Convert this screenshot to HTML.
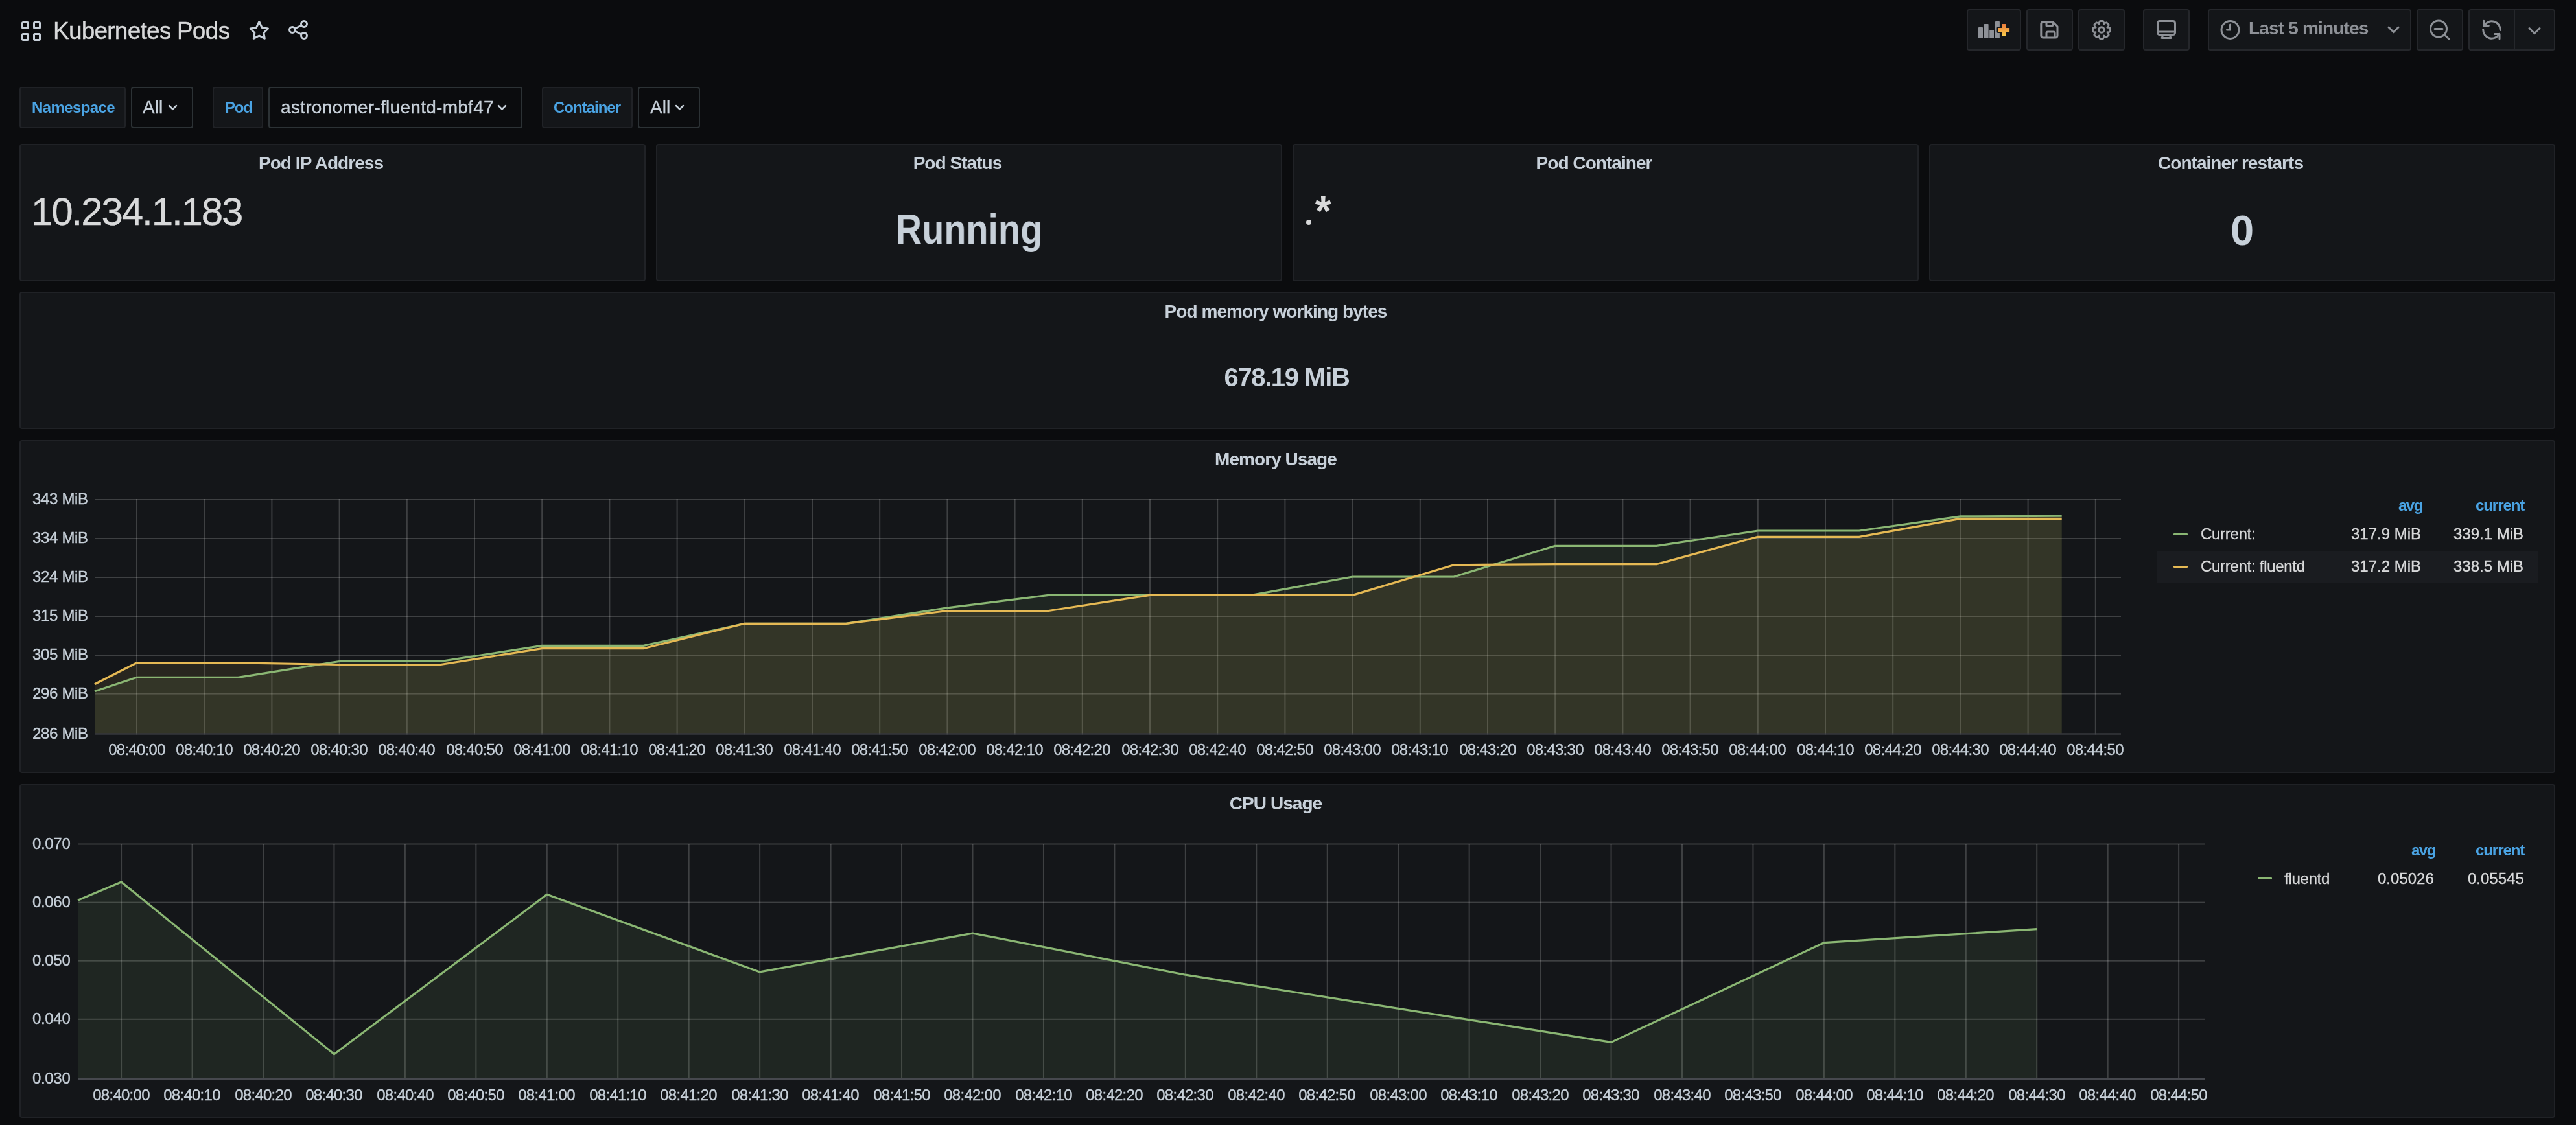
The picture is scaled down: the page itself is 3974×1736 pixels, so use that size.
<!DOCTYPE html><html><head><meta charset="utf-8"><style>
html,body{margin:0;padding:0;width:3974px;height:1736px;overflow:hidden;background:#0b0c0e;font-family:"Liberation Sans", sans-serif;}
.t{position:absolute;white-space:nowrap;line-height:1;will-change:transform;}.r{-webkit-text-stroke:0.35px currentColor;}
.b{position:absolute;box-sizing:border-box;}
svg{position:absolute;left:0;top:0;}
</style></head><body>
<svg width="3974" height="100" style="left:0;top:0">
<rect x="34.5" y="34.5" width="9" height="9" rx="1.2" fill="none" stroke="#c7d0d9" stroke-width="3"/>
<rect x="52.5" y="34.5" width="9" height="9" rx="1.2" fill="none" stroke="#c7d0d9" stroke-width="3"/>
<rect x="34.5" y="52.5" width="9" height="9" rx="1.2" fill="none" stroke="#c7d0d9" stroke-width="3"/>
<rect x="52.5" y="52.5" width="9" height="9" rx="1.2" fill="none" stroke="#c7d0d9" stroke-width="3"/>
<path d="M399.8 33.5 L404.2 42.6 L413.5 44 L406.8 50.8 L408.3 59.3 L399.8 55 L391.3 59.3 L392.8 50.8 L386.2 44 L395.4 42.6 Z" fill="none" stroke="#c7d0d9" stroke-width="3" stroke-linejoin="round"/>
<g fill="none" stroke="#c7d0d9" stroke-width="3"><circle cx="469" cy="37" r="4.5"/><circle cx="451" cy="46" r="4.5"/><circle cx="469" cy="55" r="4.5"/><line x1="455" y1="44" x2="465" y2="39"/><line x1="455" y1="48" x2="465" y2="53"/></g>
</svg>
<div class="t r" style="top:28.68px;font-size:37px;color:#d8d9da;font-weight:400;letter-spacing:-0.78px;left:82.00px;">Kubernetes Pods</div>
<div class="b" style="left:3034px;top:14px;width:84px;height:64px;background:#141619;border:2px solid #25272b;border-radius:4px;"></div>
<div class="b" style="left:3126px;top:14px;width:72px;height:64px;background:#141619;border:2px solid #25272b;border-radius:4px;"></div>
<div class="b" style="left:3206px;top:14px;width:72px;height:64px;background:#141619;border:2px solid #25272b;border-radius:4px;"></div>
<div class="b" style="left:3306px;top:14px;width:72px;height:64px;background:#141619;border:2px solid #25272b;border-radius:4px;"></div>
<div class="b" style="left:3406px;top:14px;width:314px;height:64px;background:#141619;border:2px solid #25272b;border-radius:4px;"></div>
<div class="b" style="left:3728px;top:14px;width:72px;height:64px;background:#141619;border:2px solid #25272b;border-radius:4px;"></div>
<div class="b" style="left:3808px;top:14px;width:134px;height:64px;background:#141619;border:2px solid #25272b;border-radius:4px;"></div>
<div class="b" style="left:3878px;top:14px;width:2px;height:64px;background:#25272b"></div>
<svg width="3974" height="100" style="left:0;top:0">
<defs><linearGradient id="og" x1="0" y1="0" x2="0" y2="1"><stop offset="0" stop-color="#eb7b3c"/><stop offset="1" stop-color="#f7c94a"/></linearGradient></defs>
<g fill="#8e9197"><rect x="3052" y="42" width="7" height="17" rx="0.8"/><rect x="3060.8" y="37" width="6.8" height="22" rx="0.8"/><rect x="3069.2" y="46" width="6.8" height="13" rx="0.8"/><rect x="3078" y="33" width="6.9" height="26" rx="0.8"/></g>
<path d="M3082.3 43 h6 v-5.9 h5.9 v5.9 h5.9 v6.2 h-5.9 v5.7 h-5.9 v-5.7 h-6 z" fill="#141619" stroke="#141619" stroke-width="3.5" stroke-linejoin="round"/>
<path d="M3082.3 43 h6 v-5.9 h5.9 v5.9 h5.9 v6.2 h-5.9 v5.7 h-5.9 v-5.7 h-6 z" fill="url(#og)"/>
<g fill="none" stroke="#8e9197" stroke-width="3" stroke-linejoin="round"><path d="M3152.8 33.8 h14.2 l7 7 v14.3 a3 3 0 0 1 -3 3 h-19.2 a3 3 0 0 1 -3 -3 v-18.3 a3 3 0 0 1 3 -3 z"/><path d="M3157 34 v5.5 h9.5 v-5.5"/><path d="M3157 58 v-7 a2 2 0 0 1 2 -2 h9 a2 2 0 0 1 2 2 v7"/></g>
<polygon points="3238.10,35.40 3239.60,32.50 3244.40,32.50 3245.90,35.40 3245.67,37.13 3246.74,35.75 3249.85,34.76 3253.24,38.15 3252.25,41.26 3250.87,42.33 3252.60,42.10 3255.50,43.60 3255.50,48.40 3252.60,49.90 3250.87,49.67 3252.25,50.74 3253.24,53.85 3249.85,57.24 3246.74,56.25 3245.67,54.87 3245.90,56.60 3244.40,59.50 3239.60,59.50 3238.10,56.60 3238.33,54.87 3237.26,56.25 3234.15,57.24 3230.76,53.85 3231.75,50.74 3233.13,49.67 3231.40,49.90 3228.50,48.40 3228.50,43.60 3231.40,42.10 3233.13,42.33 3231.75,41.26 3230.76,38.15 3234.15,34.76 3237.26,35.75 3238.33,37.13" fill="none" stroke="#8e9197" stroke-width="2.8" stroke-linejoin="round"/>
<circle cx="3242" cy="46" r="4.3" fill="none" stroke="#8e9197" stroke-width="3"/>
<g fill="none" stroke="#8e9197" stroke-width="3" stroke-linejoin="round"><rect x="3328.5" y="32.5" width="27" height="21" rx="3"/><line x1="3329" y1="49" x2="3355" y2="49"/><path d="M3337 54 l-2 4.5 h14 l-2 -4.5"/></g>
<g fill="none" stroke="#8e9197" stroke-width="3" stroke-linecap="round"><circle cx="3440.5" cy="46" r="13.5"/><path d="M3440.5 38 v8 h-5"/></g>
<path d="M3685 42 l7.5 7.5 l7.5 -7.5" fill="none" stroke="#8e9197" stroke-width="3" stroke-linecap="round"/>
<path d="M3902 43.5 l8 8 l8 -8" fill="none" stroke="#8e9197" stroke-width="3" stroke-linecap="round"/>
<g fill="none" stroke="#8e9197" stroke-width="3" stroke-linecap="round"><circle cx="3762" cy="44.5" r="12.5"/><line x1="3756" y1="44.5" x2="3768" y2="44.5"/><line x1="3771" y1="53.5" x2="3778" y2="60"/></g>
<g fill="none" stroke="#8e9197" stroke-width="3" stroke-linecap="round" stroke-linejoin="round"><path d="M3832.4 39.6 A13.3 13.3 0 0 1 3857.3 46.5"/><path d="M3831.8 32.3 V39.6 H3839.3"/><path d="M3855.6 52.4 A13.3 13.3 0 0 1 3830.7 45.5"/><path d="M3856 59.7 V52.4 H3848.5"/></g>
</svg>
<div class="t" style="top:30.30px;font-size:28px;color:#8e9197;font-weight:700;letter-spacing:-0.83px;left:3469.00px;">Last 5 minutes</div>
<div class="b" style="left:30px;top:134px;width:164px;height:64px;background:#141619;border:2px solid #202226;border-radius:4px;"></div>
<div class="t" style="top:153.68px;font-size:24px;color:#4aa3e3;font-weight:700;letter-spacing:-0.6px;left:49.00px;">Namespace</div>
<div class="b" style="left:202px;top:134px;width:96px;height:64px;background:#0b0c0e;border:2px solid #2c3235;border-radius:4px;"></div>
<div class="t r" style="top:152.30px;font-size:28px;color:#c7d0d9;font-weight:400;letter-spacing:0px;left:220.00px;">All</div>
<svg width="20" height="20" style="left:258px;top:158px"><path d="M3 5 l5.5 5.5 l5.5 -5.5" fill="none" stroke="#c7d0d9" stroke-width="2.5" stroke-linecap="round"/></svg>
<div class="b" style="left:328px;top:134px;width:78px;height:64px;background:#141619;border:2px solid #202226;border-radius:4px;"></div>
<div class="t" style="top:153.68px;font-size:24px;color:#4aa3e3;font-weight:700;letter-spacing:-1.2px;left:346.50px;">Pod</div>
<div class="b" style="left:414px;top:134px;width:392px;height:64px;background:#0b0c0e;border:2px solid #2c3235;border-radius:4px;"></div>
<div class="t r" style="top:152.30px;font-size:28px;color:#c7d0d9;font-weight:400;letter-spacing:0.28px;left:433.00px;">astronomer-fluentd-mbf47</div>
<svg width="20" height="20" style="left:766px;top:158px"><path d="M3 5 l5.5 5.5 l5.5 -5.5" fill="none" stroke="#c7d0d9" stroke-width="2.5" stroke-linecap="round"/></svg>
<div class="b" style="left:836px;top:134px;width:140px;height:64px;background:#141619;border:2px solid #202226;border-radius:4px;"></div>
<div class="t" style="top:153.68px;font-size:24px;color:#4aa3e3;font-weight:700;letter-spacing:-1.0px;left:854.00px;">Container</div>
<div class="b" style="left:984px;top:134px;width:96px;height:64px;background:#0b0c0e;border:2px solid #2c3235;border-radius:4px;"></div>
<div class="t r" style="top:152.30px;font-size:28px;color:#c7d0d9;font-weight:400;letter-spacing:0px;left:1003.00px;">All</div>
<svg width="20" height="20" style="left:1040px;top:158px"><path d="M3 5 l5.5 5.5 l5.5 -5.5" fill="none" stroke="#c7d0d9" stroke-width="2.5" stroke-linecap="round"/></svg>
<div class="b" style="left:30px;top:222px;width:966px;height:212px;background:#141619;border:2px solid #202226;border-radius:4px;"></div>
<div class="t" style="top:238.30px;font-size:28px;color:#c7d0d9;font-weight:700;letter-spacing:-0.95px;left:-5.47px;width:1000px;text-align:center;">Pod IP Address</div>
<div class="b" style="left:1012px;top:222px;width:966px;height:212px;background:#141619;border:2px solid #202226;border-radius:4px;"></div>
<div class="t" style="top:238.30px;font-size:28px;color:#c7d0d9;font-weight:700;letter-spacing:-0.95px;left:976.52px;width:1000px;text-align:center;">Pod Status</div>
<div class="b" style="left:1994px;top:222px;width:966px;height:212px;background:#141619;border:2px solid #202226;border-radius:4px;"></div>
<div class="t" style="top:238.30px;font-size:28px;color:#c7d0d9;font-weight:700;letter-spacing:-0.95px;left:1958.53px;width:1000px;text-align:center;">Pod Container</div>
<div class="b" style="left:2976px;top:222px;width:966px;height:212px;background:#141619;border:2px solid #202226;border-radius:4px;"></div>
<div class="t" style="top:238.30px;font-size:28px;color:#c7d0d9;font-weight:700;letter-spacing:-0.95px;left:2940.53px;width:1000px;text-align:center;">Container restarts</div>
<div class="t r" style="top:296.51px;font-size:60px;color:#d8d9da;font-weight:400;letter-spacing:-2.08px;left:48.30px;">10.234.1.183</div>
<div class="t" style="top:321.48px;font-size:65px;color:#c7d0d9;font-weight:700;letter-spacing:0px;transform:scaleX(0.86);left:995.00px;width:1000px;text-align:center;">Running</div>
<div class="t" style="top:322.98px;font-size:65px;color:#c7d0d9;font-weight:700;letter-spacing:0px;left:2959.00px;width:1000px;text-align:center;">0</div>
<svg width="20" height="20" style="left:2009px;top:333px"><circle cx="10" cy="10" r="4" fill="#d8d9da"/></svg>
<div class="t" style="top:294.32px;font-size:64px;color:#d8d9da;font-weight:700;letter-spacing:0px;left:2010.50px;"><span style="visibility:hidden">.</span>*</div>
<div class="b" style="left:30px;top:450px;width:3912px;height:212px;background:#141619;border:2px solid #202226;border-radius:4px;"></div>
<div class="t" style="top:467.30px;font-size:28px;color:#c7d0d9;font-weight:700;letter-spacing:-0.95px;left:1467.53px;width:1000px;text-align:center;">Pod memory working bytes</div>
<div class="t" style="top:562.14px;font-size:40px;color:#c7d0d9;font-weight:700;letter-spacing:-1.4px;left:1485.30px;width:1000px;text-align:center;">678.19 MiB</div>
<div class="b" style="left:30px;top:679px;width:3912px;height:514px;background:#141619;border:2px solid #202226;border-radius:4px;"></div>
<div class="t" style="top:695.30px;font-size:28px;color:#c7d0d9;font-weight:700;letter-spacing:-0.95px;left:1467.53px;width:1000px;text-align:center;">Memory Usage</div>
<svg width="3974" height="1736" style="left:0;top:0">
<rect x="146" y="770.00" width="3126" height="2" fill="#fff" fill-opacity="0.18"/><rect x="146" y="830.00" width="3126" height="2" fill="#fff" fill-opacity="0.18"/><rect x="146" y="890.00" width="3126" height="2" fill="#fff" fill-opacity="0.18"/><rect x="146" y="950.00" width="3126" height="2" fill="#fff" fill-opacity="0.18"/><rect x="146" y="1010.00" width="3126" height="2" fill="#fff" fill-opacity="0.18"/><rect x="146" y="1069.60" width="3126" height="2" fill="#fff" fill-opacity="0.18"/><rect x="210.00" y="770" width="2" height="363.5" fill="#fff" fill-opacity="0.18"/><rect x="314.20" y="770" width="2" height="363.5" fill="#fff" fill-opacity="0.18"/><rect x="418.40" y="770" width="2" height="363.5" fill="#fff" fill-opacity="0.18"/><rect x="522.60" y="770" width="2" height="363.5" fill="#fff" fill-opacity="0.18"/><rect x="626.80" y="770" width="2" height="363.5" fill="#fff" fill-opacity="0.18"/><rect x="731.00" y="770" width="2" height="363.5" fill="#fff" fill-opacity="0.18"/><rect x="835.20" y="770" width="2" height="363.5" fill="#fff" fill-opacity="0.18"/><rect x="939.40" y="770" width="2" height="363.5" fill="#fff" fill-opacity="0.18"/><rect x="1043.60" y="770" width="2" height="363.5" fill="#fff" fill-opacity="0.18"/><rect x="1147.80" y="770" width="2" height="363.5" fill="#fff" fill-opacity="0.18"/><rect x="1252.00" y="770" width="2" height="363.5" fill="#fff" fill-opacity="0.18"/><rect x="1356.20" y="770" width="2" height="363.5" fill="#fff" fill-opacity="0.18"/><rect x="1460.40" y="770" width="2" height="363.5" fill="#fff" fill-opacity="0.18"/><rect x="1564.60" y="770" width="2" height="363.5" fill="#fff" fill-opacity="0.18"/><rect x="1668.80" y="770" width="2" height="363.5" fill="#fff" fill-opacity="0.18"/><rect x="1773.00" y="770" width="2" height="363.5" fill="#fff" fill-opacity="0.18"/><rect x="1877.20" y="770" width="2" height="363.5" fill="#fff" fill-opacity="0.18"/><rect x="1981.40" y="770" width="2" height="363.5" fill="#fff" fill-opacity="0.18"/><rect x="2085.60" y="770" width="2" height="363.5" fill="#fff" fill-opacity="0.18"/><rect x="2189.80" y="770" width="2" height="363.5" fill="#fff" fill-opacity="0.18"/><rect x="2294.00" y="770" width="2" height="363.5" fill="#fff" fill-opacity="0.18"/><rect x="2398.20" y="770" width="2" height="363.5" fill="#fff" fill-opacity="0.18"/><rect x="2502.40" y="770" width="2" height="363.5" fill="#fff" fill-opacity="0.18"/><rect x="2606.60" y="770" width="2" height="363.5" fill="#fff" fill-opacity="0.18"/><rect x="2710.80" y="770" width="2" height="363.5" fill="#fff" fill-opacity="0.18"/><rect x="2815.00" y="770" width="2" height="363.5" fill="#fff" fill-opacity="0.18"/><rect x="2919.20" y="770" width="2" height="363.5" fill="#fff" fill-opacity="0.18"/><rect x="3023.40" y="770" width="2" height="363.5" fill="#fff" fill-opacity="0.18"/><rect x="3127.60" y="770" width="2" height="363.5" fill="#fff" fill-opacity="0.18"/><rect x="3231.80" y="770" width="2" height="363.5" fill="#fff" fill-opacity="0.18"/>
<polygon points="146.0,1066.7 211.0,1045.3 367.3,1045.3 523.6,1020.5 679.9,1020.5 836.2,996.4 992.5,996.4 1148.8,962.3 1305.1,962.3 1461.4,937.8 1617.7,918.4 1774.0,918.4 1930.3,918.4 2086.6,890.0 2242.9,890.0 2399.2,842.3 2555.5,842.3 2711.8,819.0 2868.1,819.0 3024.4,796.9 3180.7,796.2 3180.7,1131.5 146.0,1131.5" fill="#8ab673" fill-opacity="0.1"/>
<polygon points="146.0,1055.8 211.0,1022.8 367.3,1022.8 523.6,1025.5 679.9,1025.5 836.2,1000.7 992.5,1000.7 1148.8,962.3 1305.1,962.3 1461.4,942.5 1617.7,942.5 1774.0,918.4 1930.3,918.4 2086.6,918.4 2242.9,871.8 2399.2,870.6 2555.5,870.6 2711.8,828.3 2868.1,828.3 3024.4,800.4 3180.7,800.3 3180.7,1131.5 146.0,1131.5" fill="#e5b954" fill-opacity="0.1"/>
<polyline points="146.0,1066.7 211.0,1045.3 367.3,1045.3 523.6,1020.5 679.9,1020.5 836.2,996.4 992.5,996.4 1148.8,962.3 1305.1,962.3 1461.4,937.8 1617.7,918.4 1774.0,918.4 1930.3,918.4 2086.6,890.0 2242.9,890.0 2399.2,842.3 2555.5,842.3 2711.8,819.0 2868.1,819.0 3024.4,796.9 3180.7,796.2" fill="none" stroke="#8ab673" stroke-width="3.2" stroke-linejoin="round"/>
<polyline points="146.0,1055.8 211.0,1022.8 367.3,1022.8 523.6,1025.5 679.9,1025.5 836.2,1000.7 992.5,1000.7 1148.8,962.3 1305.1,962.3 1461.4,942.5 1617.7,942.5 1774.0,918.4 1930.3,918.4 2086.6,918.4 2242.9,871.8 2399.2,870.6 2555.5,870.6 2711.8,828.3 2868.1,828.3 3024.4,800.4 3180.7,800.3" fill="none" stroke="#e5b954" stroke-width="3.2" stroke-linejoin="round"/>
<rect x="146" y="1131.50" width="3126" height="2" fill="#46484e"/>
</svg>
<div class="t r" style="top:758.18px;font-size:24px;color:#c7d0d9;font-weight:400;letter-spacing:-0.33px;right:3838.17px;text-align:right;">343 MiB</div>
<div class="t r" style="top:818.18px;font-size:24px;color:#c7d0d9;font-weight:400;letter-spacing:-0.33px;right:3838.17px;text-align:right;">334 MiB</div>
<div class="t r" style="top:878.18px;font-size:24px;color:#c7d0d9;font-weight:400;letter-spacing:-0.33px;right:3838.17px;text-align:right;">324 MiB</div>
<div class="t r" style="top:938.18px;font-size:24px;color:#c7d0d9;font-weight:400;letter-spacing:-0.33px;right:3838.17px;text-align:right;">315 MiB</div>
<div class="t r" style="top:998.18px;font-size:24px;color:#c7d0d9;font-weight:400;letter-spacing:-0.33px;right:3838.17px;text-align:right;">305 MiB</div>
<div class="t r" style="top:1057.78px;font-size:24px;color:#c7d0d9;font-weight:400;letter-spacing:-0.33px;right:3838.17px;text-align:right;">296 MiB</div>
<div class="t r" style="top:1119.68px;font-size:24px;color:#c7d0d9;font-weight:400;letter-spacing:-0.33px;right:3838.17px;text-align:right;">286 MiB</div>
<div class="t r" style="top:1145.18px;font-size:24px;color:#c7d0d9;font-weight:400;letter-spacing:-0.73px;left:-289.37px;width:1000px;text-align:center;">08:40:00</div>
<div class="t r" style="top:1145.18px;font-size:24px;color:#c7d0d9;font-weight:400;letter-spacing:-0.73px;left:-185.17px;width:1000px;text-align:center;">08:40:10</div>
<div class="t r" style="top:1145.18px;font-size:24px;color:#c7d0d9;font-weight:400;letter-spacing:-0.73px;left:-80.97px;width:1000px;text-align:center;">08:40:20</div>
<div class="t r" style="top:1145.18px;font-size:24px;color:#c7d0d9;font-weight:400;letter-spacing:-0.73px;left:23.24px;width:1000px;text-align:center;">08:40:30</div>
<div class="t r" style="top:1145.18px;font-size:24px;color:#c7d0d9;font-weight:400;letter-spacing:-0.73px;left:127.43px;width:1000px;text-align:center;">08:40:40</div>
<div class="t r" style="top:1145.18px;font-size:24px;color:#c7d0d9;font-weight:400;letter-spacing:-0.73px;left:231.63px;width:1000px;text-align:center;">08:40:50</div>
<div class="t r" style="top:1145.18px;font-size:24px;color:#c7d0d9;font-weight:400;letter-spacing:-0.73px;left:335.84px;width:1000px;text-align:center;">08:41:00</div>
<div class="t r" style="top:1145.18px;font-size:24px;color:#c7d0d9;font-weight:400;letter-spacing:-0.73px;left:440.03px;width:1000px;text-align:center;">08:41:10</div>
<div class="t r" style="top:1145.18px;font-size:24px;color:#c7d0d9;font-weight:400;letter-spacing:-0.73px;left:544.23px;width:1000px;text-align:center;">08:41:20</div>
<div class="t r" style="top:1145.18px;font-size:24px;color:#c7d0d9;font-weight:400;letter-spacing:-0.73px;left:648.44px;width:1000px;text-align:center;">08:41:30</div>
<div class="t r" style="top:1145.18px;font-size:24px;color:#c7d0d9;font-weight:400;letter-spacing:-0.73px;left:752.63px;width:1000px;text-align:center;">08:41:40</div>
<div class="t r" style="top:1145.18px;font-size:24px;color:#c7d0d9;font-weight:400;letter-spacing:-0.73px;left:856.84px;width:1000px;text-align:center;">08:41:50</div>
<div class="t r" style="top:1145.18px;font-size:24px;color:#c7d0d9;font-weight:400;letter-spacing:-0.73px;left:961.04px;width:1000px;text-align:center;">08:42:00</div>
<div class="t r" style="top:1145.18px;font-size:24px;color:#c7d0d9;font-weight:400;letter-spacing:-0.73px;left:1065.24px;width:1000px;text-align:center;">08:42:10</div>
<div class="t r" style="top:1145.18px;font-size:24px;color:#c7d0d9;font-weight:400;letter-spacing:-0.73px;left:1169.43px;width:1000px;text-align:center;">08:42:20</div>
<div class="t r" style="top:1145.18px;font-size:24px;color:#c7d0d9;font-weight:400;letter-spacing:-0.73px;left:1273.63px;width:1000px;text-align:center;">08:42:30</div>
<div class="t r" style="top:1145.18px;font-size:24px;color:#c7d0d9;font-weight:400;letter-spacing:-0.73px;left:1377.84px;width:1000px;text-align:center;">08:42:40</div>
<div class="t r" style="top:1145.18px;font-size:24px;color:#c7d0d9;font-weight:400;letter-spacing:-0.73px;left:1482.04px;width:1000px;text-align:center;">08:42:50</div>
<div class="t r" style="top:1145.18px;font-size:24px;color:#c7d0d9;font-weight:400;letter-spacing:-0.73px;left:1586.24px;width:1000px;text-align:center;">08:43:00</div>
<div class="t r" style="top:1145.18px;font-size:24px;color:#c7d0d9;font-weight:400;letter-spacing:-0.73px;left:1690.44px;width:1000px;text-align:center;">08:43:10</div>
<div class="t r" style="top:1145.18px;font-size:24px;color:#c7d0d9;font-weight:400;letter-spacing:-0.73px;left:1794.63px;width:1000px;text-align:center;">08:43:20</div>
<div class="t r" style="top:1145.18px;font-size:24px;color:#c7d0d9;font-weight:400;letter-spacing:-0.73px;left:1898.84px;width:1000px;text-align:center;">08:43:30</div>
<div class="t r" style="top:1145.18px;font-size:24px;color:#c7d0d9;font-weight:400;letter-spacing:-0.73px;left:2003.04px;width:1000px;text-align:center;">08:43:40</div>
<div class="t r" style="top:1145.18px;font-size:24px;color:#c7d0d9;font-weight:400;letter-spacing:-0.73px;left:2107.24px;width:1000px;text-align:center;">08:43:50</div>
<div class="t r" style="top:1145.18px;font-size:24px;color:#c7d0d9;font-weight:400;letter-spacing:-0.73px;left:2211.44px;width:1000px;text-align:center;">08:44:00</div>
<div class="t r" style="top:1145.18px;font-size:24px;color:#c7d0d9;font-weight:400;letter-spacing:-0.73px;left:2315.64px;width:1000px;text-align:center;">08:44:10</div>
<div class="t r" style="top:1145.18px;font-size:24px;color:#c7d0d9;font-weight:400;letter-spacing:-0.73px;left:2419.84px;width:1000px;text-align:center;">08:44:20</div>
<div class="t r" style="top:1145.18px;font-size:24px;color:#c7d0d9;font-weight:400;letter-spacing:-0.73px;left:2524.04px;width:1000px;text-align:center;">08:44:30</div>
<div class="t r" style="top:1145.18px;font-size:24px;color:#c7d0d9;font-weight:400;letter-spacing:-0.73px;left:2628.24px;width:1000px;text-align:center;">08:44:40</div>
<div class="t r" style="top:1145.18px;font-size:24px;color:#c7d0d9;font-weight:400;letter-spacing:-0.73px;left:2732.44px;width:1000px;text-align:center;">08:44:50</div>
<div class="t" style="top:767.68px;font-size:24px;color:#4aa3e3;font-weight:700;letter-spacing:-1.5px;right:237.00px;text-align:right;">avg</div>
<div class="t" style="top:767.68px;font-size:24px;color:#4aa3e3;font-weight:700;letter-spacing:-1.07px;right:79.43px;text-align:right;">current</div>
<div class="b" style="left:3328px;top:850px;width:587px;height:49px;background:#1a1c20"></div>
<div class="b" style="left:3353px;top:822.5px;width:22px;height:3px;background:#8ab673;border-radius:1px"></div>
<div class="b" style="left:3353px;top:872.5px;width:22px;height:3px;background:#e5b954;border-radius:1px"></div>
<div class="t r" style="top:812.18px;font-size:24px;color:#d8d9da;font-weight:400;letter-spacing:-0.29px;left:3394.50px;">Current:</div>
<div class="t r" style="top:861.68px;font-size:24px;color:#d8d9da;font-weight:400;letter-spacing:-0.29px;left:3394.50px;">Current: fluentd</div>
<div class="t r" style="top:812.18px;font-size:24px;color:#d8d9da;font-weight:400;letter-spacing:0px;right:238.50px;text-align:right;">317.9 MiB</div>
<div class="t r" style="top:812.18px;font-size:24px;color:#d8d9da;font-weight:400;letter-spacing:0px;right:80.50px;text-align:right;">339.1 MiB</div>
<div class="t r" style="top:861.68px;font-size:24px;color:#d8d9da;font-weight:400;letter-spacing:0px;right:238.50px;text-align:right;">317.2 MiB</div>
<div class="t r" style="top:861.68px;font-size:24px;color:#d8d9da;font-weight:400;letter-spacing:0px;right:80.50px;text-align:right;">338.5 MiB</div>
<div class="b" style="left:30px;top:1210px;width:3912px;height:515px;background:#141619;border:2px solid #202226;border-radius:4px;"></div>
<div class="t" style="top:1226.30px;font-size:28px;color:#c7d0d9;font-weight:700;letter-spacing:-0.95px;left:1467.53px;width:1000px;text-align:center;">CPU Usage</div>
<svg width="3974" height="1736" style="left:0;top:0">
<rect x="120" y="1301.50" width="3282" height="2" fill="#fff" fill-opacity="0.18"/><rect x="120" y="1391.60" width="3282" height="2" fill="#fff" fill-opacity="0.18"/><rect x="120" y="1481.70" width="3282" height="2" fill="#fff" fill-opacity="0.18"/><rect x="120" y="1571.80" width="3282" height="2" fill="#fff" fill-opacity="0.18"/><rect x="186.10" y="1302" width="2" height="364" fill="#fff" fill-opacity="0.18"/><rect x="295.55" y="1302" width="2" height="364" fill="#fff" fill-opacity="0.18"/><rect x="405.00" y="1302" width="2" height="364" fill="#fff" fill-opacity="0.18"/><rect x="514.45" y="1302" width="2" height="364" fill="#fff" fill-opacity="0.18"/><rect x="623.90" y="1302" width="2" height="364" fill="#fff" fill-opacity="0.18"/><rect x="733.35" y="1302" width="2" height="364" fill="#fff" fill-opacity="0.18"/><rect x="842.80" y="1302" width="2" height="364" fill="#fff" fill-opacity="0.18"/><rect x="952.25" y="1302" width="2" height="364" fill="#fff" fill-opacity="0.18"/><rect x="1061.70" y="1302" width="2" height="364" fill="#fff" fill-opacity="0.18"/><rect x="1171.15" y="1302" width="2" height="364" fill="#fff" fill-opacity="0.18"/><rect x="1280.60" y="1302" width="2" height="364" fill="#fff" fill-opacity="0.18"/><rect x="1390.05" y="1302" width="2" height="364" fill="#fff" fill-opacity="0.18"/><rect x="1499.50" y="1302" width="2" height="364" fill="#fff" fill-opacity="0.18"/><rect x="1608.95" y="1302" width="2" height="364" fill="#fff" fill-opacity="0.18"/><rect x="1718.40" y="1302" width="2" height="364" fill="#fff" fill-opacity="0.18"/><rect x="1827.85" y="1302" width="2" height="364" fill="#fff" fill-opacity="0.18"/><rect x="1937.30" y="1302" width="2" height="364" fill="#fff" fill-opacity="0.18"/><rect x="2046.75" y="1302" width="2" height="364" fill="#fff" fill-opacity="0.18"/><rect x="2156.20" y="1302" width="2" height="364" fill="#fff" fill-opacity="0.18"/><rect x="2265.65" y="1302" width="2" height="364" fill="#fff" fill-opacity="0.18"/><rect x="2375.10" y="1302" width="2" height="364" fill="#fff" fill-opacity="0.18"/><rect x="2484.55" y="1302" width="2" height="364" fill="#fff" fill-opacity="0.18"/><rect x="2594.00" y="1302" width="2" height="364" fill="#fff" fill-opacity="0.18"/><rect x="2703.45" y="1302" width="2" height="364" fill="#fff" fill-opacity="0.18"/><rect x="2812.90" y="1302" width="2" height="364" fill="#fff" fill-opacity="0.18"/><rect x="2922.35" y="1302" width="2" height="364" fill="#fff" fill-opacity="0.18"/><rect x="3031.80" y="1302" width="2" height="364" fill="#fff" fill-opacity="0.18"/><rect x="3141.25" y="1302" width="2" height="364" fill="#fff" fill-opacity="0.18"/><rect x="3250.70" y="1302" width="2" height="364" fill="#fff" fill-opacity="0.18"/><rect x="3360.15" y="1302" width="2" height="364" fill="#fff" fill-opacity="0.18"/>
<polygon points="120.0,1389.2 187.1,1361.1 515.5,1626.7 843.8,1380.3 1172.2,1499.9 1500.5,1440.1 1828.8,1504.2 2485.6,1608.4 2813.9,1454.7 3142.2,1433.7 3142.2,1664.0 120.0,1664.0" fill="#8ab673" fill-opacity="0.1"/>
<polyline points="120.0,1389.2 187.1,1361.1 515.5,1626.7 843.8,1380.3 1172.2,1499.9 1500.5,1440.1 1828.8,1504.2 2485.6,1608.4 2813.9,1454.7 3142.2,1433.7" fill="none" stroke="#8ab673" stroke-width="3.2" stroke-linejoin="round"/>
<rect x="120" y="1664.00" width="3282" height="2" fill="#46484e"/>
</svg>
<div class="t r" style="top:1289.68px;font-size:24px;color:#c7d0d9;font-weight:400;letter-spacing:-0.33px;right:3865.67px;text-align:right;">0.070</div>
<div class="t r" style="top:1379.78px;font-size:24px;color:#c7d0d9;font-weight:400;letter-spacing:-0.33px;right:3865.67px;text-align:right;">0.060</div>
<div class="t r" style="top:1469.88px;font-size:24px;color:#c7d0d9;font-weight:400;letter-spacing:-0.33px;right:3865.67px;text-align:right;">0.050</div>
<div class="t r" style="top:1559.98px;font-size:24px;color:#c7d0d9;font-weight:400;letter-spacing:-0.33px;right:3865.67px;text-align:right;">0.040</div>
<div class="t r" style="top:1652.18px;font-size:24px;color:#c7d0d9;font-weight:400;letter-spacing:-0.33px;right:3865.67px;text-align:right;">0.030</div>
<div class="t r" style="top:1677.68px;font-size:24px;color:#c7d0d9;font-weight:400;letter-spacing:-0.73px;left:-313.26px;width:1000px;text-align:center;">08:40:00</div>
<div class="t r" style="top:1677.68px;font-size:24px;color:#c7d0d9;font-weight:400;letter-spacing:-0.73px;left:-203.81px;width:1000px;text-align:center;">08:40:10</div>
<div class="t r" style="top:1677.68px;font-size:24px;color:#c7d0d9;font-weight:400;letter-spacing:-0.73px;left:-94.36px;width:1000px;text-align:center;">08:40:20</div>
<div class="t r" style="top:1677.68px;font-size:24px;color:#c7d0d9;font-weight:400;letter-spacing:-0.73px;left:15.09px;width:1000px;text-align:center;">08:40:30</div>
<div class="t r" style="top:1677.68px;font-size:24px;color:#c7d0d9;font-weight:400;letter-spacing:-0.73px;left:124.53px;width:1000px;text-align:center;">08:40:40</div>
<div class="t r" style="top:1677.68px;font-size:24px;color:#c7d0d9;font-weight:400;letter-spacing:-0.73px;left:233.99px;width:1000px;text-align:center;">08:40:50</div>
<div class="t r" style="top:1677.68px;font-size:24px;color:#c7d0d9;font-weight:400;letter-spacing:-0.73px;left:343.44px;width:1000px;text-align:center;">08:41:00</div>
<div class="t r" style="top:1677.68px;font-size:24px;color:#c7d0d9;font-weight:400;letter-spacing:-0.73px;left:452.88px;width:1000px;text-align:center;">08:41:10</div>
<div class="t r" style="top:1677.68px;font-size:24px;color:#c7d0d9;font-weight:400;letter-spacing:-0.73px;left:562.34px;width:1000px;text-align:center;">08:41:20</div>
<div class="t r" style="top:1677.68px;font-size:24px;color:#c7d0d9;font-weight:400;letter-spacing:-0.73px;left:671.79px;width:1000px;text-align:center;">08:41:30</div>
<div class="t r" style="top:1677.68px;font-size:24px;color:#c7d0d9;font-weight:400;letter-spacing:-0.73px;left:781.23px;width:1000px;text-align:center;">08:41:40</div>
<div class="t r" style="top:1677.68px;font-size:24px;color:#c7d0d9;font-weight:400;letter-spacing:-0.73px;left:890.68px;width:1000px;text-align:center;">08:41:50</div>
<div class="t r" style="top:1677.68px;font-size:24px;color:#c7d0d9;font-weight:400;letter-spacing:-0.73px;left:1000.13px;width:1000px;text-align:center;">08:42:00</div>
<div class="t r" style="top:1677.68px;font-size:24px;color:#c7d0d9;font-weight:400;letter-spacing:-0.73px;left:1109.59px;width:1000px;text-align:center;">08:42:10</div>
<div class="t r" style="top:1677.68px;font-size:24px;color:#c7d0d9;font-weight:400;letter-spacing:-0.73px;left:1219.03px;width:1000px;text-align:center;">08:42:20</div>
<div class="t r" style="top:1677.68px;font-size:24px;color:#c7d0d9;font-weight:400;letter-spacing:-0.73px;left:1328.48px;width:1000px;text-align:center;">08:42:30</div>
<div class="t r" style="top:1677.68px;font-size:24px;color:#c7d0d9;font-weight:400;letter-spacing:-0.73px;left:1437.93px;width:1000px;text-align:center;">08:42:40</div>
<div class="t r" style="top:1677.68px;font-size:24px;color:#c7d0d9;font-weight:400;letter-spacing:-0.73px;left:1547.38px;width:1000px;text-align:center;">08:42:50</div>
<div class="t r" style="top:1677.68px;font-size:24px;color:#c7d0d9;font-weight:400;letter-spacing:-0.73px;left:1656.84px;width:1000px;text-align:center;">08:43:00</div>
<div class="t r" style="top:1677.68px;font-size:24px;color:#c7d0d9;font-weight:400;letter-spacing:-0.73px;left:1766.29px;width:1000px;text-align:center;">08:43:10</div>
<div class="t r" style="top:1677.68px;font-size:24px;color:#c7d0d9;font-weight:400;letter-spacing:-0.73px;left:1875.73px;width:1000px;text-align:center;">08:43:20</div>
<div class="t r" style="top:1677.68px;font-size:24px;color:#c7d0d9;font-weight:400;letter-spacing:-0.73px;left:1985.19px;width:1000px;text-align:center;">08:43:30</div>
<div class="t r" style="top:1677.68px;font-size:24px;color:#c7d0d9;font-weight:400;letter-spacing:-0.73px;left:2094.64px;width:1000px;text-align:center;">08:43:40</div>
<div class="t r" style="top:1677.68px;font-size:24px;color:#c7d0d9;font-weight:400;letter-spacing:-0.73px;left:2204.09px;width:1000px;text-align:center;">08:43:50</div>
<div class="t r" style="top:1677.68px;font-size:24px;color:#c7d0d9;font-weight:400;letter-spacing:-0.73px;left:2313.54px;width:1000px;text-align:center;">08:44:00</div>
<div class="t r" style="top:1677.68px;font-size:24px;color:#c7d0d9;font-weight:400;letter-spacing:-0.73px;left:2422.99px;width:1000px;text-align:center;">08:44:10</div>
<div class="t r" style="top:1677.68px;font-size:24px;color:#c7d0d9;font-weight:400;letter-spacing:-0.73px;left:2532.44px;width:1000px;text-align:center;">08:44:20</div>
<div class="t r" style="top:1677.68px;font-size:24px;color:#c7d0d9;font-weight:400;letter-spacing:-0.73px;left:2641.89px;width:1000px;text-align:center;">08:44:30</div>
<div class="t r" style="top:1677.68px;font-size:24px;color:#c7d0d9;font-weight:400;letter-spacing:-0.73px;left:2751.34px;width:1000px;text-align:center;">08:44:40</div>
<div class="t r" style="top:1677.68px;font-size:24px;color:#c7d0d9;font-weight:400;letter-spacing:-0.73px;left:2860.79px;width:1000px;text-align:center;">08:44:50</div>
<div class="t" style="top:1300.18px;font-size:24px;color:#4aa3e3;font-weight:700;letter-spacing:-1.5px;right:217.50px;text-align:right;">avg</div>
<div class="t" style="top:1300.18px;font-size:24px;color:#4aa3e3;font-weight:700;letter-spacing:-1.07px;right:79.43px;text-align:right;">current</div>
<div class="b" style="left:3483px;top:1354px;width:22px;height:3px;background:#8ab673;border-radius:1px"></div>
<div class="t r" style="top:1343.68px;font-size:24px;color:#d8d9da;font-weight:400;letter-spacing:-0.29px;left:3524.00px;">fluentd</div>
<div class="t r" style="top:1343.68px;font-size:24px;color:#d8d9da;font-weight:400;letter-spacing:0px;right:219.00px;text-align:right;">0.05026</div>
<div class="t r" style="top:1343.68px;font-size:24px;color:#d8d9da;font-weight:400;letter-spacing:0px;right:80.50px;text-align:right;">0.05545</div>
</body></html>
